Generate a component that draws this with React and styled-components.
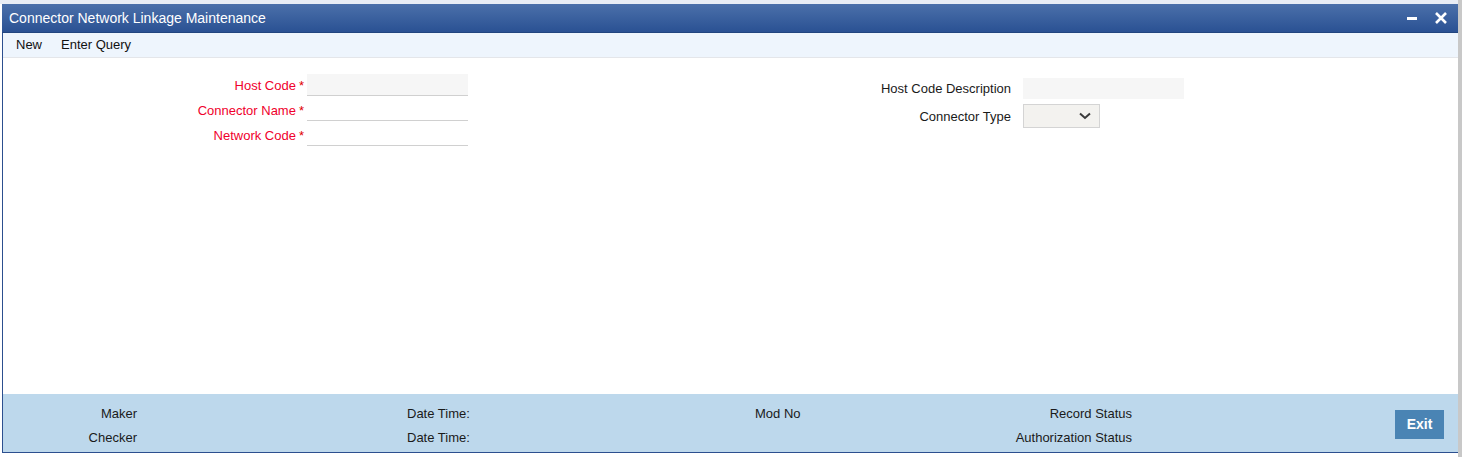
import React from "react";
import styled, { createGlobalStyle } from "styled-components";

const GlobalStyle = createGlobalStyle`
  html, body {
    margin: 0;
    padding: 0;
    background: #ffffff;
  }
  body {
    font-family: "Liberation Sans", Arial, sans-serif;
    font-size: 13px;
    color: #222;
  }
`;

const Page = styled.div`
  display: flex;
  height: 457px;
  border-top: 4px solid #e8edf5;
  box-sizing: border-box;
  padding-left: 2px;
`;

const Window = styled.div`
  flex: 1;
  height: 449px;
  display: flex;
  flex-direction: column;
  border-left: 1px solid #2c4f8f;
  border-bottom: 1px solid #2c4f8f;
  box-sizing: border-box;
`;

const Scroll = styled.div`
  width: 4px;
  margin-top: -4px;
  background: #c8c8c8;
`;

const TitleBar = styled.div`
  height: 28px;
  display: flex;
  align-items: center;
  padding: 0 10px 0 6px;
  margin-left: -1px;
  background: linear-gradient(#4b70aa, #2a5193);
  border-bottom: 1px solid #22457f;
  color: #fff;
  font-size: 14px;
`;

const Title = styled.span`
  flex: 1;
  padding-left: 1px;
`;

const WinButton = styled.button`
  border: none;
  background: none;
  padding: 0;
  margin-left: 15px;
  width: 14px;
  height: 14px;
  display: flex;
  align-items: center;
  justify-content: center;
  cursor: pointer;
`;

const Toolbar = styled.div`
  height: 25px;
  box-sizing: border-box;
  padding-bottom: 2px;
  display: flex;
  align-items: center;
  gap: 19px;
  padding-left: 13px;
  background: #eef5fd;
  border-bottom: 1px solid #e4e6ea;
`;

const ToolItem = styled.span`
  font-size: 13px;
  color: #111;
`;

const Body = styled.div`
  flex: 1;
  display: flex;
  gap: 232px;
  padding-top: 16px;
`;

const Column = styled.div`
  display: grid;
  grid-template-columns: ${(p) => p.labelWidth}px auto;
  column-gap: ${(p) => p.gap}px;
  row-gap: ${(p) => p.rowGap}px;
  align-content: start;
  align-items: center;
  padding-top: ${(p) => p.top || 0}px;
`;

const Label = styled.label`
  text-align: right;
  font-size: 13px;
  color: ${(p) => (p.required ? "#f0002c" : "#1a1a1a")};
`;

const Star = styled.span`
  color: #e00000;
  margin-left: 3px;
`;

const TextInput = styled.input`
  width: 161px;
  height: ${(p) => p.h || 22}px;
  box-sizing: border-box;
  border: none;
  border-bottom: 1px solid ${(p) => (p.flat ? "transparent" : "#d0d0d0")};
  background: ${(p) => (p.filled ? "#f6f6f6" : "#fff")};
  padding: 0 4px;
  font: inherit;
  outline: none;
`;

const Select = styled.div`
  width: 77px;
  height: 24px;
  box-sizing: border-box;
  border: 1px solid #d4d4d4;
  background: #f3f2ef;
  display: flex;
  align-items: center;
  justify-content: flex-end;
  padding-right: 8px;
`;

const Footer = styled.div`
  height: 58px;
  display: flex;
  align-items: center;
  background: #bdd8ec;
  padding-right: 14px;
`;

const FooterGrid = styled.div`
  flex: 1;
  display: grid;
  grid-template-columns: 134px 270px 348px 200px 177px;
  grid-auto-rows: 24px;
  align-items: center;
  align-self: flex-start;
  padding-top: 7px;
  font-size: 13px;
  color: #1a1a1a;
`;

const Cell = styled.span`
  grid-column: ${(p) => p.col};
  text-align: ${(p) => (p.right ? "right" : "left")};
`;

const ExitButton = styled.button`
  width: 49px;
  height: 29px;
  border: none;
  background: #4a84b4;
  color: #fff;
  font-family: "Liberation Sans", Arial, sans-serif;
  font-weight: bold;
  font-size: 14px;
  padding: 0;
  margin-top: 2px;
  cursor: pointer;
`;

const Minimize = () => (
  <svg width="10" height="14" viewBox="0 0 10 14">
    <rect x="0" y="6" width="10" height="3" fill="#fff" />
  </svg>
);

const Close = () => (
  <svg width="12" height="12" viewBox="0 0 12 12">
    <path d="M1 1 L11 11 M11 1 L1 11" stroke="#fff" strokeWidth="2.6" />
  </svg>
);

const Chevron = () => (
  <svg width="12" height="8" viewBox="0 0 12 8">
    <path d="M1 1.5 L6 6 L11 1.5" fill="none" stroke="#3a3a3a" strokeWidth="2" />
  </svg>
);

const App = () => {
  return (
    <>
      <GlobalStyle />
      <Page>
        <Window>
          <TitleBar>
            <Title>Connector Network Linkage Maintenance</Title>
            <WinButton aria-label="minimize">
              <Minimize />
            </WinButton>
            <WinButton aria-label="close">
              <Close />
            </WinButton>
          </TitleBar>
          <Toolbar>
            <ToolItem>New</ToolItem>
            <ToolItem>Enter Query</ToolItem>
          </Toolbar>
          <Body>
            <Column labelWidth={301} gap={3} rowGap={3}>
              <Label required>
                Host Code<Star>*</Star>
              </Label>
              <TextInput filled readOnly />
              <Label required>
                Connector Name<Star>*</Star>
              </Label>
              <TextInput />
              <Label required>
                Network Code<Star>*</Star>
              </Label>
              <TextInput />
            </Column>
            <Column labelWidth={311} gap={12} rowGap={5} top={4}>
              <Label>Host Code Description</Label>
              <TextInput filled flat h={21} readOnly />
              <Label>Connector Type</Label>
              <Select>
                <Chevron />
              </Select>
            </Column>
          </Body>
          <Footer>
            <FooterGrid>
              <Cell col={1} right>
                Maker
              </Cell>
              <Cell col={3}>Date Time:</Cell>
              <Cell col={4}>Mod No</Cell>
              <Cell col={5} right>
                Record Status
              </Cell>
              <Cell col={1} right>
                Checker
              </Cell>
              <Cell col={3}>Date Time:</Cell>
              <Cell col={5} right>
                Authorization Status
              </Cell>
            </FooterGrid>
            <ExitButton>Exit</ExitButton>
          </Footer>
        </Window>
        <Scroll />
      </Page>
    </>
  );
};

export default App;
